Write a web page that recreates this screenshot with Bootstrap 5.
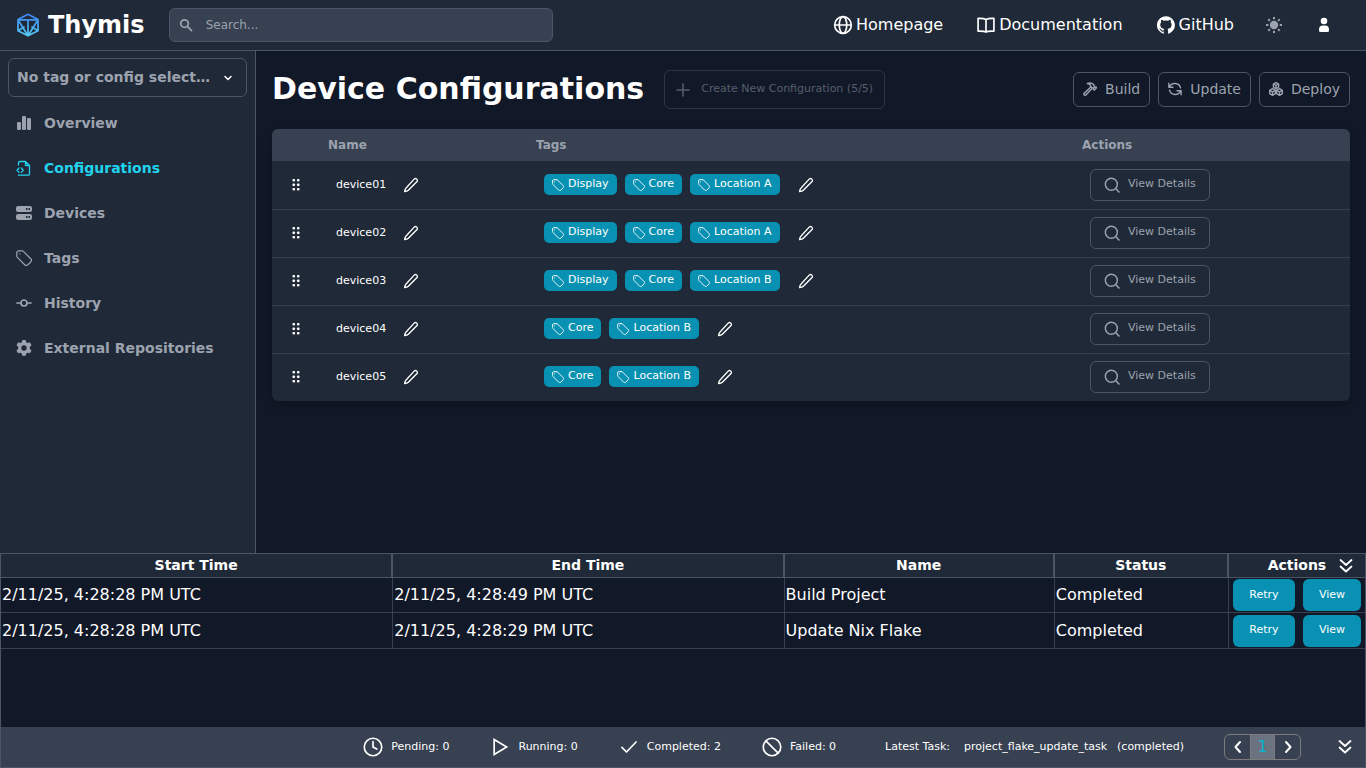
<!DOCTYPE html>
<html lang="en" data-bs-theme="dark">
<head>
<meta charset="utf-8">
<meta name="viewport" content="width=device-width, initial-scale=1">
<title>Thymis - Device Configurations</title>
<link href="https://cdn.jsdelivr.net/npm/bootstrap@5.3.0/dist/css/bootstrap.min.css" rel="stylesheet">
<style>
:root { --g900:#111827; --g800:#1f2937; --g700:#374151; --g600:#4b5563; --g400:#9ca3af; --accent:#0891b2; }
body { font-family:"DejaVu Sans",sans-serif; font-size:16px; line-height:24px; background:var(--g900); color:#fff; }
svg { fill:none; stroke:currentColor; stroke-width:2; stroke-linecap:round; stroke-linejoin:round; flex:none; display:block; }
svg.solid { fill:currentColor; stroke:none; }
.i12 { width:12px; height:12px; } .i14 { width:14px; height:14px; } .i16 { width:16px; height:16px; }
.i20 { width:20px; height:20px; } .i24 { width:24px; height:24px; }
a { color:inherit; text-decoration:none; }
.topbar { background:var(--g800); border-bottom:1px solid var(--g600); height:51px; }
.brand { font-size:24px; line-height:32px; font-weight:700; }
.searchbox { width:384px; height:34px; margin-left:24px; background:var(--g700); border:1px solid var(--g600); border-radius:6px; color:var(--g400); }
.searchbox svg { margin-left:9px; stroke-width:3; }
.searchbox input { font-size:12px; line-height:16px; color:#fff; margin-left:13px; padding:0 8px 0 0; outline:0; }
.searchbox input::placeholder { color:var(--g400); opacity:1; }
.toplinks { gap:33px; }
.toplinks a { gap:3px; }
.iconbtn { background:none; border:0; padding:0; color:#fff; }
.topbar .iconbtn { margin-left:32px; }
.topbar .iconbtn:last-child { margin:0 18px 0 34px; }
.dim { color:var(--g400) !important; }
.side { width:256px; background:var(--g800); border-right:1px solid var(--g600); padding:7px 8px; font-size:14px; line-height:20px; font-weight:700; color:var(--g400); }
.picker { height:39px; border:1px solid var(--g600); border-radius:6px; }
.picker select { appearance:none; background:none; border:0; color:inherit; font:inherit; width:100%; height:37px; padding:0 35px 1px 8px; text-overflow:ellipsis; white-space:nowrap; overflow:hidden; }
.picker svg { right:12px; top:13px; color:#fff; pointer-events:none; }
.side nav { gap:25px; padding:16px 8px; }
.side nav a { gap:12px; }
.side nav a.current { color:#22d3ee; }
.page { padding:19px 16px; }
.page h1 { font-size:30px; line-height:36px; font-weight:700; padding-bottom:2px; }
.ghost { background:transparent; border:1px solid var(--g600); border-radius:6px; color:var(--g400); display:inline-flex; align-items:center; }
.act { height:35px; font-size:14px; line-height:20px; padding:0 9px 1px 9px; gap:8px; }
.act svg { stroke-width:2.4; }
.create { height:39px; font-size:11px; line-height:16px; padding:0 11px 0 10px; gap:10px; margin-left:20px; opacity:.5; }
.details { height:32px; font-size:11px; line-height:16px; padding:0 13px; gap:8px; }
.details svg { stroke-width:2.2; }
.details span, .create span, .pill span { padding-bottom:2px; }
.sheet { margin-top:20px; background:var(--g800); border-radius:6px; overflow:hidden; box-shadow:0 4px 12px rgba(0,0,0,.2); }
.sheet table { width:100%; table-layout:fixed; border-collapse:separate; border-spacing:0; font-size:11px; line-height:16px; }
.sheet th { background:var(--g700); color:var(--g400); font-size:12px; height:32px; padding:0 8px; }
.sheet td { height:48px; padding:0 16px 2px; border-top:1px solid var(--g700); }
.sheet tbody tr:first-child td { border-top-color:transparent; }
.c-grip { width:48px; } .c-dev { width:208px; } .c-view { width:276px; }
.named { gap:17px; }
.retag { margin-left:10px; }
.pill { background:var(--accent); border-radius:5px; height:21px; padding:0 8px; gap:4px; display:inline-flex; align-items:center; }
.pill svg { stroke-width:1.5; }
.tasks { height:215px; border:1px solid var(--g600); border-top:0; }
.tasks table { width:100%; table-layout:fixed; border-collapse:separate; border-spacing:0; }
.tasks th { background:var(--g800); font-size:14px; line-height:20px; height:25px; padding:0 0 2px; text-align:center; border:1px solid var(--g600); }
.tasks td { height:36px; padding:0 0 0 1px; border-bottom:1px solid var(--g700); border-left:1px solid var(--g700); }
.tasks tbody tr:first-child td { height:35px; }
.tasks th:first-child, .tasks td:first-child { border-left:0; }
.tasks th:last-child { border-right:0; }
.c-time { width:391px; } .c-task { width:270px; } .c-stat { width:174px; } .c-act { width:137px; }
.tasks td.duo { padding:0 4px; }
.fillbtn { background:var(--accent); border:0; border-radius:6px; color:#fff; font-size:11px; line-height:16px; height:32px; padding:0 0 1px; }
.fillbtn.wide { flex:62; } .fillbtn.slim { flex:58; }
.fold { right:11px; top:5px; }
.foot { background:var(--g700); height:40px; font-size:11px; line-height:16px; }
.foot .stat { gap:8px; margin-right:41px; }
.latest { gap:10px; margin-left:8px; }
.pager { border:1px solid #7b7b7b; border-radius:6px; height:26px; overflow:hidden; margin:0 36px 0 40px; }
.pager button { background:none; border:0; color:#fff; width:25px; padding:0; display:flex; align-items:center; justify-content:center; font-size:16px; }
.pager button.on { background:#6b7280; color:#06b6d4; border:solid #7b7b7b; border-width:0 1px; }
</style>
</head>
<body>
<svg width="0" height="0" class="position-absolute" aria-hidden="true">
<defs>
<symbol id="tag" viewBox="2 2 20 20"><path d="M9.570 3H5.250A2.250 2.250 0 0 0 3 5.250v4.320c0 .6.240 1.170.660 1.590l9.580 9.580c.7.7 1.780.870 2.610.330a18.100 18.100 0 0 0 5.220-5.220c.540-.830.370-1.910-.330-2.610L11.160 3.660A2.250 2.250 0 0 0 9.570 3Z"/><path d="M6.700 6.700h.1v.1h-.1z"/></symbol>
<symbol id="pencil" viewBox="0 0 24 24"><path d="M16.800 3.200a2.600 2.600 0 0 1 3.900 3.900L8 19.800c-1 1-2.500 1.900-5.600 2.200.3-3.100 1.200-4.600 2.200-5.600Z"/></symbol>
<symbol id="lens" viewBox="0 0 24 24"><circle cx="11" cy="11" r="9"/><path d="m22.500 22.500-4.800-4.800"/></symbol>
<symbol id="grip" viewBox="0 0 16 16"><g fill="currentColor" stroke="none"><rect x="4.500" y="2" width="2.500" height="2.500" rx=".8"/><rect x="9" y="2" width="2.500" height="2.500" rx=".8"/><rect x="4.500" y="6.500" width="2.500" height="2.500" rx=".8"/><rect x="9" y="6.500" width="2.500" height="2.500" rx=".8"/><rect x="4.500" y="11" width="2.500" height="2.500" rx=".8"/><rect x="9" y="11" width="2.500" height="2.500" rx=".8"/></g></symbol>
<symbol id="down2" viewBox="0 0 16 16"><path d="m2.500 2 5.500 5 5.500-5M2.500 8.500l5.500 5 5.500-5" stroke-width="1.800"/></symbol>
</defs>
</svg>
<div class="d-flex flex-column vh-100">
<header class="topbar d-flex align-items-center px-3">
  <a href="#" class="brand d-flex align-items-center gap-2">
    <svg class="i24" viewBox="0 0 24 24"><defs><linearGradient id="lg" gradientUnits="userSpaceOnUse" x1="0" y1="0" x2="0" y2="24"><stop offset="0" stop-color="#3b82f6"/><stop offset="1" stop-color="#56ccf2"/></linearGradient></defs><path stroke="url(#lg)" stroke-width="1.700" d="M12 1.300 22 6.500v11.200L12 22.800 2 17.700V6.500ZM3 6.800h18M12 7v15M2.500 7.500l9 14.500M21.500 7.500l-9 14.500M2.800 17.200 8 14M21.200 17.200 16 14"/></svg>
    <span>Thymis</span>
  </a>
  <div class="searchbox d-flex align-items-center">
    <svg class="i14" viewBox="0 0 24 24"><circle cx="9.500" cy="9.500" r="6.500"/><path d="m14.500 14.500 7 7"/></svg>
    <input type="search" class="flex-fill border-0 bg-transparent" placeholder="Search..." aria-label="Search">
  </div>
  <nav class="toplinks d-flex align-items-center ms-auto">
    <a href="#" class="d-flex align-items-center"><svg class="i20" viewBox="0 0 24 24"><circle cx="12" cy="12" r="10"/><ellipse cx="12" cy="12" rx="4.500" ry="10"/><path d="M2 12h20"/></svg>Homepage</a>
    <a href="#" class="d-flex align-items-center"><svg class="i20" viewBox="0 0 24 24"><path d="M12 5.500C10 4 7 3.800 2.500 4v15.500C7 19.300 10 19.300 12 20.500c2-1.200 5-1.200 9.500-1V4C17 3.800 14 4 12 5.500Zm0 0v15"/></svg>Documentation</a>
    <a href="#" class="d-flex align-items-center"><svg class="i20 solid" viewBox="0 0 24 24"><path d="M12 1.500a10.700 10.700 0 0 0-3.400 20.900c.5.100.7-.2.700-.5v-2c-3 .6-3.600-1.300-3.600-1.300-.5-1.200-1.200-1.600-1.200-1.600-1-.7.1-.7.1-.7 1.100.1 1.600 1.100 1.600 1.100 1 1.700 2.500 1.200 3.100.9.100-.7.400-1.200.7-1.500-2.400-.3-4.900-1.200-4.900-5.300 0-1.200.4-2.100 1.100-2.900-.1-.3-.5-1.400.1-2.800 0 0 .9-.3 2.900 1.100a10 10 0 0 1 5.400 0c2-1.400 2.900-1.100 2.900-1.100.6 1.400.2 2.500.1 2.800.7.800 1.100 1.700 1.100 2.900 0 4.100-2.500 5-4.900 5.300.4.300.7 1 .7 2v3.100c0 .3.200.6.700.5A10.700 10.700 0 0 0 12 1.500Z"/></svg>GitHub</a>
  </nav>
  <button class="iconbtn dim" aria-label="Toggle light mode"><svg class="i16" viewBox="0 0 16 16"><circle cx="8" cy="8" r="4.200" fill="currentColor" stroke="none"/><path stroke-linecap="butt" d="M8 0v2.300M8 13.700V16M0 8h2.300M13.700 8H16M2.300 2.300l1.600 1.600M12.100 12.100l1.600 1.600M2.300 13.700l1.600-1.600M12.100 3.900l1.600-1.600"/></svg></button>
  <button class="iconbtn" aria-label="Account"><svg class="i16 solid" viewBox="0 0 16 16"><circle cx="8" cy="4" r="3.300"/><path d="M3 12.500a4 4 0 0 1 4-4h2a4 4 0 0 1 4 4v1a1.500 1.500 0 0 1-1.500 1.500h-7A1.500 1.500 0 0 1 3 13.500Z"/></svg></button>
</header>
<div class="d-flex flex-fill overflow-hidden">
  <aside class="side flex-shrink-0">
    <div class="picker position-relative">
      <select aria-label="Tag or configuration"><option>No tag or config selected</option></select>
      <svg class="i12 position-absolute" viewBox="0 0 12 12"><path d="m3 4.500 3 3 3-3" stroke-width="1.500"/></svg>
    </div>
    <nav class="d-flex flex-column">
      <a href="#" class="d-flex align-items-center"><svg class="i16 solid" viewBox="0 0 16 16"><rect x="1" y="7" width="4" height="8" rx="1.300"/><rect x="6" y="1" width="4" height="14" rx="1.300"/><rect x="11" y="3" width="4" height="12" rx="1.300"/></svg>Overview</a>
      <a href="#" class="d-flex align-items-center current" aria-current="page"><svg class="i16" viewBox="0 0 16 16"><path stroke-width="1.300" d="M2.500 5V3c0-1 .5-1.500 1.500-1.500h5.500l4 4V14c0 .8-.3 1.200-1.200 1.200H2.500M9.500 1.500v4h4M3 8 1 10.200 3 12.400M5.300 8l2 2.200-2 2.200"/></svg>Configurations</a>
      <a href="#" class="d-flex align-items-center"><svg class="i16 solid" viewBox="0 0 16 16"><path fill-rule="evenodd" d="M2 1h12a2 2 0 0 1 2 2v2a2 2 0 0 1-2 2H2a2 2 0 0 1-2-2V3a2 2 0 0 1 2-2Zm8 2v2h1.500V3Zm2.500 0v2H14V3ZM2 9h12a2 2 0 0 1 2 2v2a2 2 0 0 1-2 2H2a2 2 0 0 1-2-2v-2a2 2 0 0 1 2-2Zm8 2v2h1.500v-2Zm2.500 0v2H14v-2Z"/></svg>Devices</a>
      <a href="#" class="d-flex align-items-center"><svg class="i16" style="stroke-width:1.500"><use href="#tag"/></svg>Tags</a>
      <a href="#" class="d-flex align-items-center"><svg class="i16" viewBox="0 0 16 16"><path stroke-width="1.700" d="M1 8h4M11 8h4M5 8a3 3 0 1 0 6 0 3 3 0 1 0-6 0"/></svg>History</a>
      <a href="#" class="d-flex align-items-center"><svg class="i16 solid" viewBox="0 0 24 24"><path fill-rule="evenodd" d="M9.500 0h5l.8 3.500 2 1.100L20.800 3.500l2.500 4.300-2.600 2.500v2.800l2.600 2.600-2.500 4.300-3.500-1-2 1.200-.8 3.600h-5l-.8-3.600-2-1.200-3.500 1L.7 15.700l2.600-2.600v-2.800L.7 7.800l2.500-4.300 3.500 1.100 2-1.100ZM12 8a4 4 0 1 0 0 8 4 4 0 0 0 0-8Z"/></svg>External Repositories</a>
    </nav>
  </aside>
  <main class="page flex-fill overflow-auto">
    <div class="d-flex align-items-center">
      <h1 class="m-0">Device Configurations</h1>
      <button class="ghost create" disabled><svg class="i16" viewBox="0 0 16 16"><path stroke-width="1.500" d="M8 2v12M2 8h12"/></svg><span>Create New Configuration (5/5)</span></button>
      <div class="d-flex gap-2 ms-auto">
        <button class="ghost act"><svg class="i14" viewBox="0 0 24 24"><path d="M12.500 9.500 2 19.500c-1 1-.500 2 .2 2.700s1.800 1 2.800 0L15 11.700M7.500 2.500c4.500-1.500 8-.8 10.500 1.700l1 1V8l1.200 1.200 2-.7 1 1.200-3.700 4.300-1.700-1.200.5-1.800-1.300-1.300h-1.700l-2.500-2.500V5.500C11.500 3.500 9.500 3 7.500 2.500Z"/></svg>Build</button>
        <button class="ghost act"><svg class="i14" viewBox="0 0 24 24"><path d="M1.500 2v7h7M22.500 22v-7h-7M1.500 9h1A10 10 0 0 1 21.500 10M22.500 15h-1A10 10 0 0 1 2.500 14"/></svg>Update</button>
        <button class="ghost act"><svg class="i14" viewBox="0 0 24 24"><path d="m12 1 4.500 2.500V9L12 11.500 7.500 9V3.500ZM6 11.500l5 2.800V20l-5 2.800L1 20v-5.700ZM18 11.500l5 2.800V20l-5 2.800-5-2.800v-5.700ZM7.500 3.500 12 6l4.500-2.500M12 6v5M1 14.500 6 17l5-2.500M6 17v5.500M13 14.500l5 2.500 5-2.500M18 17v5.500"/></svg>Deploy</button>
      </div>
    </div>
    <div class="sheet">
      <table>
        <colgroup><col class="c-grip"><col class="c-dev"><col><col class="c-view"></colgroup>
        <thead><tr><th></th><th>Name</th><th>Tags</th><th>Actions</th></tr></thead>
        <tbody id="devices"></tbody>
      </table>
    </div>
  </main>
</div>
<section class="tasks d-flex flex-column flex-shrink-0 position-relative">
  <table>
    <colgroup><col class="c-time"><col class="c-time"><col class="c-task"><col class="c-stat"><col class="c-act"></colgroup>
    <thead><tr><th>Start Time</th><th>End Time</th><th>Name</th><th>Status</th><th>Actions</th></tr></thead>
    <tbody>
      <tr><td>2/11/25, 4:28:28 PM UTC</td><td>2/11/25, 4:28:49 PM UTC</td><td>Build Project</td><td>Completed</td><td class="duo"><div class="d-flex gap-2"><button class="fillbtn wide">Retry</button><button class="fillbtn slim">View</button></div></td></tr>
      <tr><td>2/11/25, 4:28:28 PM UTC</td><td>2/11/25, 4:28:29 PM UTC</td><td>Update Nix Flake</td><td>Completed</td><td class="duo"><div class="d-flex gap-2"><button class="fillbtn wide">Retry</button><button class="fillbtn slim">View</button></div></td></tr>
    </tbody>
  </table>
  <button class="iconbtn fold position-absolute" aria-label="Collapse tasks"><svg class="i16"><use href="#down2"/></svg></button>
  <footer class="foot d-flex align-items-center justify-content-end mt-auto">
    <div class="stat d-flex align-items-center"><svg class="i20" viewBox="0 0 24 24"><circle cx="12" cy="12" r="10.500"/><path d="M12 5.500V12l4.500 2.500"/></svg>Pending: 0</div>
    <div class="stat d-flex align-items-center"><svg class="i20" viewBox="0 0 24 24"><path stroke-linejoin="miter" d="M5 3v18l15-9Z"/></svg>Running: 0</div>
    <div class="stat d-flex align-items-center"><svg class="i20" viewBox="0 0 24 24"><path d="m3.500 12.500 5.500 5.500L20.500 6"/></svg>Completed: 2</div>
    <div class="stat d-flex align-items-center"><svg class="i20" viewBox="0 0 24 24"><circle cx="12" cy="12" r="10.500"/><path d="m4.600 4.600 14.800 14.800"/></svg>Failed: 0</div>
    <div class="latest d-flex"><span class="me-1">Latest Task:</span><span>project_flake_update_task</span><span>(completed)</span></div>
    <div class="pager d-flex" role="group" aria-label="Task pages"><button aria-label="Previous page"><svg class="i16" viewBox="0 0 16 16"><path d="M10 3 5.500 8l4.500 5"/></svg></button><button class="on">1</button><button aria-label="Next page"><svg class="i16" viewBox="0 0 16 16"><path d="m6 3 4.500 5L6 13"/></svg></button></div>
    <button class="iconbtn me-2 pe-1" aria-label="Hide task bar"><svg class="i16"><use href="#down2"/></svg></button>
  </footer>
</section>
</div>
<script src="https://cdn.jsdelivr.net/npm/bootstrap@5.3.0/dist/js/bootstrap.bundle.min.js"></script>
<script>
const devices = [
  ['device01', ['Display', 'Core', 'Location A']],
  ['device02', ['Display', 'Core', 'Location A']],
  ['device03', ['Display', 'Core', 'Location B']],
  ['device04', ['Core', 'Location B']],
  ['device05', ['Core', 'Location B']]
];
const icon = (id, size) => `<svg class="${size}"><use href="#${id}"/></svg>`;
document.getElementById('devices').innerHTML = devices.map(([name, tags]) => `<tr>
  <td>${icon('grip', 'i16')}</td>
  <td><div class="named d-flex align-items-center"><span>${name}</span><button class="iconbtn" aria-label="Rename ${name}">${icon('pencil', 'i16')}</button></div></td>
  <td><div class="d-flex align-items-center gap-2">${tags.map(t => `<a href="#" class="pill">${icon('tag', 'i12')}<span>${t}</span></a>`).join('')}<button class="iconbtn retag" aria-label="Edit tags of ${name}">${icon('pencil', 'i16')}</button></div></td>
  <td><button class="ghost details">${icon('lens', 'i16')}<span>View Details</span></button></td></tr>`).join('');
</script>
</body>
</html>
